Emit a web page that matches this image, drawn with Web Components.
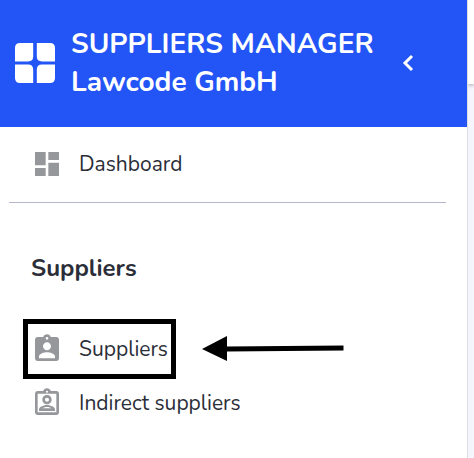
<!DOCTYPE html>
<html lang="en">
<head>
<meta charset="utf-8">
<meta name="viewport" content="width=device-width, initial-scale=1">
<title>Suppliers Manager</title>
<style>
    :root {
        --primary: #2254f6;
        --text-color: #2b2e38;
        --icon-color: #96979b;
        --divider-color: #b5b8cb;
        --border-color: #dcdee3;
        --page-background: #f4f5fd;
    }
    body {
        margin: 0;
        font-family: Nunito, Lato, sans-serif;
        color: var(--text-color);
        background: var(--page-background);
    }
</style>
</head>
<body>
<app-shell>
    <app-sidebar slot="sidebar">
        <sidebar-header slot="header">
            <span>SUPPLIERS MANAGER</span>
            <span slot="company">Lawcode GmbH</span>
        </sidebar-header>
        <nav-item icon="dashboard" href="#dashboard">Dashboard</nav-item>
        <nav-section>
            <span slot="title">Suppliers</span>
            <nav-item icon="badge" href="#suppliers" highlighted>Suppliers</nav-item>
            <nav-item icon="badge-outline" href="#indirect">Indirect suppliers</nav-item>
        </nav-section>
    </app-sidebar>
</app-shell>

<script>
const icons = {
    'dashboard': 'M3 13h8V3H3v10zm0 8h8v-6H3v6zm10 0h8V11h-8v10zm0-18v6h8V3h-8z',
    'badge': 'M19 3h-4.18C14.4 1.84 13.3 1 12 1c-1.3 0-2.4.84-2.82 2H5c-1.1 0-2 .9-2 2v14c0 1.1.9 2 2 2h14c1.1 0 2-.9 2-2V5c0-1.1-.9-2-2-2zm-7 0c.55 0 1 .45 1 1s-.45 1-1 1-1-.45-1-1 .45-1 1-1zm0 4c1.66 0 3 1.34 3 3s-1.34 3-3 3-3-1.34-3-3 1.34-3 3-3zm6 12H6v-1.4c0-2 4-3.1 6-3.1s6 1.1 6 3.1V19z',
    'badge-outline': 'M19 3h-4.18C14.4 1.84 13.3 1 12 1s-2.4.84-2.82 2H5c-1.1 0-2 .9-2 2v14c0 1.1.9 2 2 2h14c1.1 0 2-.9 2-2V5c0-1.1-.9-2-2-2zm-7-.25c.41 0 .75.34.75.75s-.34.75-.75.75-.75-.34-.75-.75.34-.75.75-.75zM19 19H5V5h14v14zM12 6c-1.93 0-3.5 1.57-3.5 3.5S10.07 13 12 13s3.5-1.57 3.5-3.5S13.93 6 12 6zm0 5c-.83 0-1.5-.67-1.5-1.5S11.17 8 12 8s1.5.67 1.5 1.5S12.83 11 12 11zm0 2.5c-2.03 0-6 1.08-6 3.58V18h12v-.92c0-2.5-3.97-3.58-6-3.58zM8.48 16c.74-.51 2.23-1 3.52-1s2.78.49 3.52 1H8.48z'
}

customElements.define('app-shell', class extends HTMLElement {
    connectedCallback() {
        this.attachShadow({ mode: "open" })
        this.shadowRoot.innerHTML = `
            <style>
                :host {
                    display: grid;
                    grid-template-columns: minmax(0, 1fr) 6px;
                    min-height: 100vh;
                }
                .toolbar {
                    height: 84px;
                    background: #fff;
                    box-shadow: 0 1px 4px rgba(0, 0, 0, .35);
                }
                main {
                    overflow: hidden;
                }
            </style>
            <slot name="sidebar"></slot>
            <main>
                <div class="toolbar"></div>
                <slot></slot>
            </main>
        `
    }
})

customElements.define('app-sidebar', class extends HTMLElement {
    connectedCallback() {
        this.attachShadow({ mode: "open" })
        this.shadowRoot.innerHTML = `
            <style>
                :host {
                    display: block;
                    background: #fff;
                    border-right: 1px solid var(--border-color);
                }
                nav {
                    padding-top: 10px;
                }
            </style>
            <slot name="header"></slot>
            <nav>
                <slot></slot>
            </nav>
        `
    }
})

customElements.define('sidebar-header', class extends HTMLElement {
    connectedCallback() {
        this.attachShadow({ mode: "open" })
        this.shadowRoot.innerHTML = `
            <style>
                :host {
                    display: flex;
                    align-items: center;
                    padding: 25px 42px 26px 15px;
                    color: #fff;
                    background: var(--primary);
                }
                svg {
                    display: block;
                    flex: none;
                }
                h1 {
                    flex: 1;
                    margin: 0 0 0 16px;
                    font-size: 28px;
                    line-height: 38px;
                    font-weight: 700;
                }
                slot {
                    display: block;
                }
                button {
                    padding: 0;
                    border: 0;
                    color: inherit;
                    background: none;
                    cursor: pointer;
                }
            </style>
            <svg width="40" height="40" viewBox="0 0 40 40" fill="currentColor" aria-hidden="true">
                <path id="tile" d="M5 0H18.2V13.2Q18.2 18.4 13 18.4H0V5Q0 0 5 0Z"/>
                <use href="#tile" transform="matrix(-1 0 0 1 40 0)"/>
                <use href="#tile" transform="matrix(1 0 0 -1 0 40)"/>
                <use href="#tile" transform="matrix(-1 0 0 -1 40 40)"/>
            </svg>
            <h1>
                <slot></slot>
                <slot name="company"></slot>
            </h1>
            <button type="button" aria-label="Collapse menu">
                <svg width="32" height="32" viewBox="0 0 32 32" fill="none" stroke="currentColor" stroke-width="3" aria-hidden="true">
                    <path d="M19 9l-7 7 7 7"/>
                </svg>
            </button>
        `
    }
})

customElements.define('nav-section', class extends HTMLElement {
    connectedCallback() {
        this.attachShadow({ mode: "open" })
        this.shadowRoot.innerHTML = `
            <style>
                :host {
                    display: block;
                }
                hr {
                    margin: 11px 21px 0 9px;
                    border: 0;
                    border-top: 1px solid var(--divider-color);
                }
                h2 {
                    margin: 49px 31px 38px;
                    font-size: 24px;
                    line-height: 32px;
                    font-weight: 700;
                }
            </style>
            <hr>
            <h2><slot name="title"></slot></h2>
            <slot></slot>
        `
    }
})

customElements.define('nav-item', class extends HTMLElement {
    connectedCallback() {
        this.attachShadow({ mode: "open" })
        this.shadowRoot.innerHTML = `
            <style>
                :host {
                    display: flex;
                    align-items: center;
                    padding-left: 23px;
                }
                a {
                    position: relative;
                    display: flex;
                    align-items: center;
                    gap: 16px;
                    height: 54px;
                    padding: 0 8px;
                    font-size: 21px;
                    color: inherit;
                    text-decoration: none;
                }
                a svg {
                    fill: var(--icon-color);
                }
                .arrow {
                    display: none;
                    margin-left: 26px;
                }
                :host([highlighted]) .arrow {
                    display: block;
                }
                :host([highlighted]) a::after {
                    content: "";
                    position: absolute;
                    inset: -3px 0;
                    border: 5px solid #000;
                }
            </style>
            <a href="${this.getAttribute('href')}">
                <svg width="32" height="32" viewBox="0 0 24 24" aria-hidden="true">
                    <path d="${icons[this.getAttribute('icon')]}"/>
                </svg>
                <slot></slot>
            </a>
            <svg class="arrow" width="142" height="26" viewBox="0 0 142 26" aria-hidden="true">
                <path d="M0 13L25 0V10.5L141.5 9.5V14.5L25 15.5V25Z"/>
            </svg>
        `
    }
})
</script>
</body>
</html>
